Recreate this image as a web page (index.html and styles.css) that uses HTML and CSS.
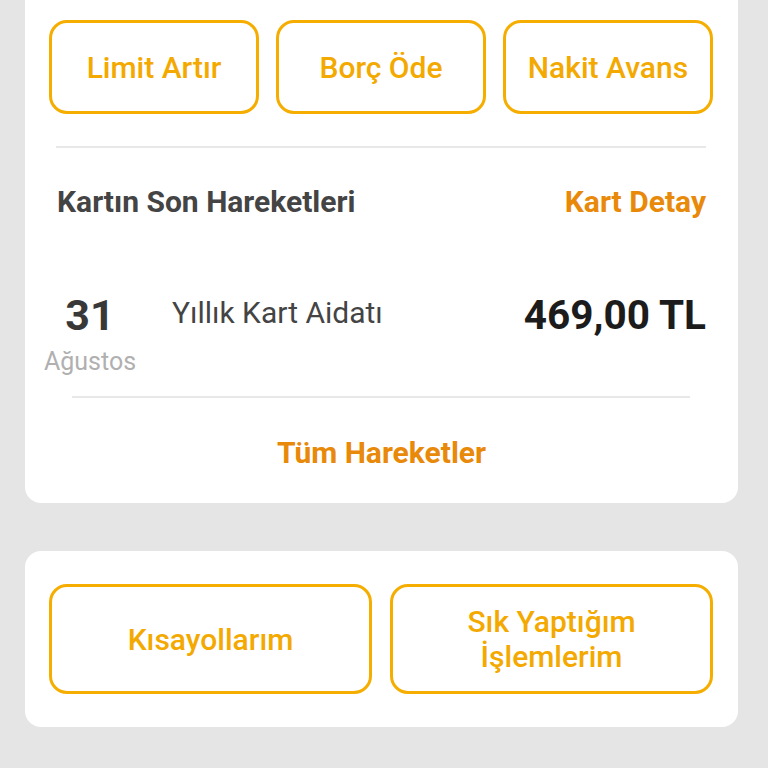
FILE: index.html
```html
<!DOCTYPE html>
<html lang="tr">
<head>
    <meta charset="UTF-8">
    <meta name="viewport" content="width=device-width, initial-scale=1.0">
    <title>Kartım</title>
    <link rel="stylesheet" href="styles.css">
</head>
<body>

    <!-- Kart kutusu -->
    <div class="card card-top">
        <div class="actions">
            <button class="btn">Limit Artır</button>
            <button class="btn">Borç Öde</button>
            <button class="btn">Nakit Avans</button>
        </div>

        <hr class="line">

        <div class="head">
            <span class="title">Kartın Son Hareketleri</span>
            <a class="link" href="#">Kart Detay</a>
        </div>

        <div class="tx">
            <div class="date">
                <div class="day">31</div>
                <div class="month">Ağustos</div>
            </div>
            <div class="desc">Yıllık Kart Aidatı</div>
            <div class="amount">469,00 TL</div>
        </div>

        <hr class="line line-in">

        <div class="all">
            <a class="link" href="#">Tüm Hareketler</a>
        </div>
    </div>

    <!-- Kısayollar -->
    <div class="card card-short">
        <div class="shortcuts">
            <button class="btn btn-big">Kısayollarım</button>
            <button class="btn btn-big">Sık Yaptığım<br>İşlemlerim</button>
        </div>
    </div>

</body>
</html>
```

FILE: styles.css
```css
body { margin: 0; padding: 0 30px 0 25px; background: #e5e5e5; font-family: Roboto, "Noto Sans", sans-serif; }

.card { background: #fff; border-radius: 16px; }
.card-top { border-radius: 0 0 16px 16px; padding: 20px 0 29px; }
.card-short { margin-top: 48px; padding: 33px 25px 33px 24px; }

/* Butonlar */
.btn { font-family: inherit; font-size: 30px; font-weight: 500; color: #f3a900; background: #fff; border: 3px solid #f5ad00; border-radius: 18px; cursor: pointer; line-height: 35px; padding: 0; box-sizing: border-box; }
.actions { display: grid; grid-template-columns: repeat(3, 1fr); gap: 17px; padding: 0 25px 0 24px; }
.actions .btn { height: 94px; }
.shortcuts { display: grid; grid-template-columns: 1fr 1fr; gap: 18px; }
.btn-big { height: 110px; }

.line { border: none; height: 2px; background: #e8e8e8; margin: 32px 32px 0 31px; }
.line-in { margin: 20px 48px 0 47px; }

.head { display: flex; justify-content: space-between; align-items: center; padding: 0 32px; margin-top: 38px; line-height: 32px; }
.title { font-size: 30px; font-weight: 700; color: #444; }
.link { font-size: 30px; font-weight: 700; color: #e8890a; text-decoration: none; }

/* Hareket satırı */
.tx { display: flex; align-items: flex-start; padding: 0 32px 0 15px; margin-top: 75px; }
.date { width: 100px; text-align: center; }
.day { font-size: 43px; font-weight: 700; color: #383838; line-height: 44px; }
.month { font-size: 25px; color: #b0b0b0; line-height: 28px; margin-top: 11px; }
.desc { flex: 1; margin-left: 32px; font-size: 30px; color: #444; line-height: 44px; margin-top: -2px; }
.amount { font-size: 40.5px; font-weight: 700; color: #1c1c1c; line-height: 44px; }

.all { text-align: center; margin-top: 39px; line-height: 32px; }
```
